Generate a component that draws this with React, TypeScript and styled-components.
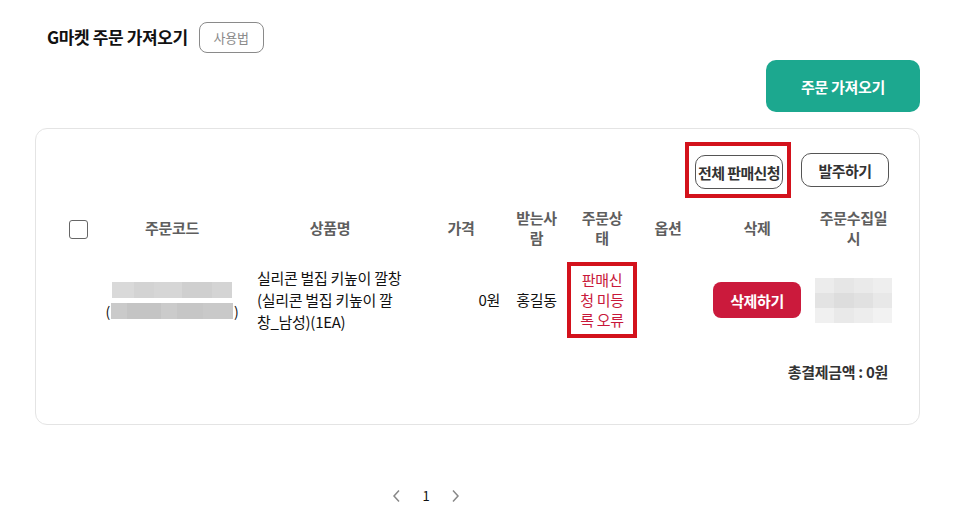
import React from "react";
import styled, { createGlobalStyle } from "styled-components";

const Global = createGlobalStyle`
  html, body { margin: 0; padding: 0; background: #fff; }
  body { font-family: "Noto Sans CJK KR", "Noto Sans", sans-serif; color: #111; }
  * { box-sizing: border-box; }
`;

const Page = styled.div`
  width: 964px;
  padding: 22px 44px 0 35px;
`;

const TitleRow = styled.div`
  display: flex;
  align-items: center;
  gap: 11px;
  padding-left: 12px;
  height: 31px;
`;

const Title = styled.h1`
  margin: 0;
  font-size: 17px;
  font-weight: 700;
  letter-spacing: -0.4px;
  color: #111;
  line-height: 24px;
  margin-top: -2px;
`;

const GhostButton = styled.button`
  height: 31px;
  width: 65px;
  border: 1px solid #8a8a8a;
  border-radius: 8px;
  background: #fff;
  color: #8a8a8a;
  font-family: inherit;
  font-size: 13px;
  letter-spacing: -0.2px;
`;

const ActionRow = styled.div`
  display: flex;
  justify-content: flex-end;
  margin-top: 7px;
`;

const PrimaryButton = styled.button`
  width: 154px;
  height: 52px;
  border: none;
  border-radius: 10px;
  background: #1ca88f;
  color: #fff;
  font-family: inherit;
  font-size: 15px;
  font-weight: 700;
  letter-spacing: -0.3px;
`;

const Card = styled.div`
  margin-top: 16px;
  border: 1px solid #e4e4e4;
  border-radius: 12px;
  padding: 13px 30px 42px 20px;
`;

const Toolbar = styled.div`
  display: flex;
  justify-content: flex-end;
  align-items: center;
  gap: 10px;
`;

const Highlight = styled.div`
  border: 4px solid #d3121c;
  padding: 9px 4px 5px 6px;
`;

const OutlineButton = styled.button<{ $w: number }>`
  width: ${(p) => p.$w}px;
  height: 34px;
  border: 1px solid #555;
  border-radius: 10px;
  background: #fff;
  color: #333;
  font-family: inherit;
  font-size: 15px;
  font-weight: 700;
  letter-spacing: -0.6px;
  padding: 0;
`;

const Table = styled.table`
  width: 836px;
  border-collapse: collapse;
  table-layout: fixed;
  margin-top: 6px;
`;

const Th = styled.th<{ $pad?: number }>`
  font-size: 15px;
  font-weight: 700;
  color: #5e5e5e;
  letter-spacing: -0.3px;
  line-height: 20px;
  padding: 4px ${(p) => (p.$pad ?? 6)}px;
  height: 48px;
  text-align: center;
  vertical-align: middle;
`;

const Td = styled.td<{ $align?: string; $pl?: number; $pr?: number }>`
  font-size: 15px;
  line-height: 22px;
  color: #111;
  letter-spacing: -0.3px;
  padding: 10px ${(p) => (p.$pr ?? 6)}px 10px ${(p) => (p.$pl ?? 6)}px;
  text-align: ${(p) => p.$align || "center"};
  vertical-align: middle;
`;

const Checkbox = styled.span`
  display: inline-block;
  width: 19px;
  height: 19px;
  border: 1.5px solid #666;
  border-radius: 3px;
  vertical-align: middle;
`;

const Mosaic = styled.div`
  display: flex;
  height: 16px;
`;

const Tile = styled.div<{ $c: string; $w: number }>`
  width: ${(p) => p.$w}px;
  background: ${(p) => p.$c};
`;

const CodeCell = styled.div`
  display: flex;
  flex-direction: column;
  align-items: center;
  gap: 5px;
`;

const ParenLine = styled.div`
  display: flex;
  align-items: center;
  gap: 1px;
  font-size: 14px;
  line-height: 16px;
  color: #111;
`;

const StatusBox = styled.div`
  border: 4px solid #d3121c;
  padding: 4px 6px;
  color: #c8183a;
  font-size: 15px;
  line-height: 20px;
  letter-spacing: -0.3px;
  text-align: center;
`;

const DangerButton = styled.button`
  width: 88px;
  height: 36px;
  border: none;
  border-radius: 8px;
  background: #cb1a3c;
  color: #fff;
  font-family: inherit;
  font-size: 15px;
  font-weight: 700;
  letter-spacing: -0.4px;
`;

const DateMosaic = styled.div`
  display: grid;
  grid-template-columns: repeat(4, 1fr);
  grid-template-rows: repeat(3, 15px);
  width: 100%;
`;

const DateTile = styled.div<{ $c: string }>`
  background: ${(p) => p.$c};
`;

const Total = styled.div`
  text-align: right;
  font-size: 15px;
  font-weight: 700;
  color: #333;
  letter-spacing: -0.3px;
  line-height: 20px;
  margin-top: 14px;
  padding-right: 1px;
`;

const Pager = styled.div`
  display: flex;
  justify-content: center;
  align-items: center;
  gap: 21px;
  margin-top: 61px;
  margin-left: -103px;
  color: #111;
  font-size: 13px;
`;

const Arrow = styled.span`
  display: inline-flex;
  color: #888;
`;

const code1 = [
  ["#d9d9d9", 22], ["#d3d3d3", 20], ["#d6d6d6", 28], ["#cfcfcf", 30], ["#d4d4d4", 20],
] as const;
const code2 = [
  ["#cacaca", 16], ["#c4c4c4", 34], ["#cbcbcb", 16], ["#c6c6c6", 26], ["#c9c9c9", 30],
] as const;
const dateColors = [
  "#ececec", "#e6e6e6", "#eaeaea", "#eeeeee",
  "#e3e3e3", "#dddddd", "#e1e1e1", "#e8e8e8",
  "#f0f0f0", "#e9e9e9", "#ededed", "#f2f2f2",
];

const cols = [44, 144, 172, 90, 61, 70, 62, 116, 77];

const Chevron = ({ dir }: { dir: "l" | "r" }) => (
  <Arrow>
    <svg width="9" height="14" viewBox="0 0 9 14" fill="none" stroke="currentColor" strokeWidth="1.5">
      {dir === "l" ? <path d="M7 1.5 2 7l5 5.5" /> : <path d="M2 1.5 7 7l-5 5.5" />}
    </svg>
  </Arrow>
);

export default function App() {
  return (
    <>
      <Global />
      <Page>
        <TitleRow>
          <Title>G마켓 주문 가져오기</Title>
          <GhostButton>사용법</GhostButton>
        </TitleRow>
        <ActionRow>
          <PrimaryButton>주문 가져오기</PrimaryButton>
        </ActionRow>
        <Card>
          <Toolbar>
            <Highlight>
              <OutlineButton $w={88}>전체 판매신청</OutlineButton>
            </Highlight>
            <OutlineButton $w={88}>발주하기</OutlineButton>
          </Toolbar>
          <Table>
            <colgroup>
              {cols.map((w, i) => (
                <col key={i} style={{ width: w }} />
              ))}
            </colgroup>
            <thead>
              <tr>
                <Th><Checkbox /></Th>
                <Th>주문코드</Th>
                <Th>상품명</Th>
                <Th>가격</Th>
                <Th $pad={6}>받는사람</Th>
                <Th $pad={10}>주문상태</Th>
                <Th>옵션</Th>
                <Th>삭제</Th>
                <Th $pad={3}>주문수집일시</Th>
              </tr>
            </thead>
            <tbody>
              <tr>
                <Td />
                <Td>
                  <CodeCell>
                    <Mosaic>
                      {code1.map(([c, w], i) => <Tile key={i} $c={c} $w={w} />)}
                    </Mosaic>
                    <ParenLine>
                      (
                      <Mosaic>
                        {code2.map(([c, w], i) => <Tile key={i} $c={c} $w={w} />)}
                      </Mosaic>
                      )
                    </ParenLine>
                  </CodeCell>
                </Td>
                <Td $align="left" $pl={13} $pr={13}>
                  실리콘 벌집 키높이 깔창(실리콘 벌집 키높이 깔창_남성)(1EA)
                </Td>
                <Td $align="right">0원</Td>
                <Td>홍길동</Td>
                <Td $pl={0} $pr={0}>
                  <StatusBox>판매신청 미등록 오류</StatusBox>
                </Td>
                <Td />
                <Td>
                  <DangerButton>삭제하기</DangerButton>
                </Td>
                <Td $pl={0} $pr={0}>
                  <DateMosaic>
                    {dateColors.map((c, i) => <DateTile key={i} $c={c} />)}
                  </DateMosaic>
                </Td>
              </tr>
            </tbody>
          </Table>
          <Total>총결제금액 : 0원</Total>
        </Card>
        <Pager>
          <Chevron dir="l" />
          <span>1</span>
          <Chevron dir="r" />
        </Pager>
      </Page>
    </>
  );
}
